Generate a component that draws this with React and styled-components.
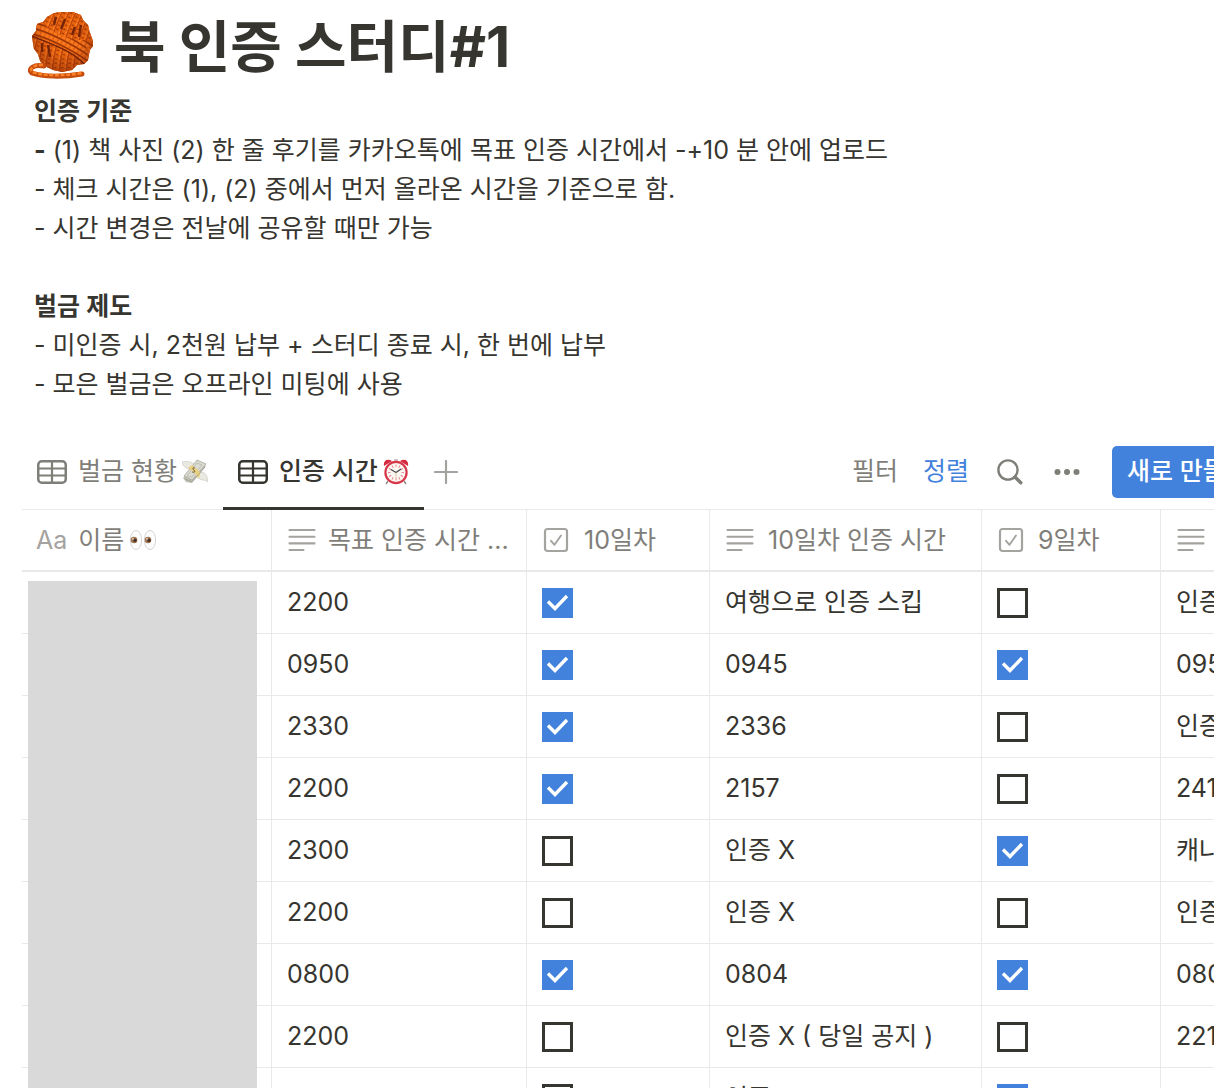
import React from 'react'
import styled, { createGlobalStyle, css } from 'styled-components'

const colors = {
  text: '#37352f',
  gray: '#7f7e79',
  icon: '#a4a39f',
  line: '#e9e9e7',
  blue: '#4281dc',
  mask: '#d9d9d9'
}

const rows = [
  { time: '2200', day10: true, day10Time: '여행으로 인증 스킵', day9: false, day9Time: '인증 X' },
  { time: '0950', day10: true, day10Time: '0945', day9: true, day9Time: '0950' },
  { time: '2330', day10: true, day10Time: '2336', day9: false, day9Time: '인증 X' },
  { time: '2200', day10: true, day10Time: '2157', day9: false, day9Time: '2410' },
  { time: '2300', day10: false, day10Time: '인증 X', day9: true, day9Time: '캐나다' },
  { time: '2200', day10: false, day10Time: '인증 X', day9: false, day9Time: '인증 X' },
  { time: '0800', day10: true, day10Time: '0804', day9: true, day9Time: '0800' },
  { time: '2200', day10: false, day10Time: '인증 X ( 당일 공지 )', day9: false, day9Time: '2210' },
  { time: '1000', day10: false, day10Time: '인증 X', day9: true, day9Time: '1000' }
]

const strands = [-36, -29, -22, -15, -8, -1, 6, 13, 20, 27]

const YarnIcon = () =>
  <svg width="66" height="68" viewBox="0 0 66 68" aria-hidden="true">
    <defs>
      <clipPath id="ball">
        <path d="M34 1 L45 1 L53 4 L55 9 L60 14 L62 22 L65 30 L65 35 L62 39 L60 49 L56 53 L49 54 L44 59 L34 61 L25 59 L17 55 L12 50 L10 43 L6 38 L5 32 L4 25 L8 20 L9 13 L15 11 L19 6 L26 2Z" />
      </clipPath>
      <clipPath id="band"><path d="M9 13 L14 11 C26 24 40 29 66 30 L64 36 L58 36 L61 50 L56 53 C44 38 22 32 4 24Z" /></clipPath>
      <radialGradient id="shade" cx="50%" cy="38%" r="60%">
        <stop offset="0.5" stopColor="#7a2005" stopOpacity="0" />
        <stop offset="1" stopColor="#7a2005" stopOpacity="0.5" />
      </radialGradient>
    </defs>
    <g clipPath="url(#ball)" fill="none">
      <path d="M0 0H66V66H0Z" fill="#b9440b" />
      {strands.map(x =>
        <g key={x}>
          <path d={`M${36 + x} 66 Q${35 + x} 38 ${54 + x} -2`} stroke="#e8640f" strokeWidth="5.4" />
          <path d={`M${35 + x} 66 Q${34 + x} 38 ${53 + x} -2`} stroke="#a33c0a" strokeWidth="2.4" strokeDasharray="1.2 3.2" />
          <path d={`M${38 + x} 66 Q${37 + x} 38 ${56 + x} -2`} stroke="#ff8127" strokeWidth="1.2" strokeDasharray="3 1.4" />
        </g>
      )}
      <path d="M28 6 L26 14 M37 8 L33 18 M53 14 L51 26 M47 16 L44 24 M14 32 L14 41 M20 34 L22 46" stroke="#742407" strokeWidth="2.4" />
      <g clipPath="url(#band)">
        <path d="M0 0H66V60H0Z" fill="#dc5a0d" />
        {[-14, -8, -2, 4, 10].map(y =>
          <g key={y}>
            <path d={`M0 ${18 + y} Q28 ${24 + y} 66 ${50 + y}`} stroke="#8f3208" strokeWidth="1.2" />
            <path d={`M0 ${21 + y} Q28 ${27 + y} 66 ${53 + y}`} stroke="#fa7a20" strokeWidth="3" strokeDasharray="3.4 1.2" />
          </g>
        )}
      </g>
      <path d="M4 25 C22 33 44 39 57 54" stroke="#74240a" strokeWidth="1.4" />
      <circle cx="35" cy="31" r="32" fill="url(#shade)" />
    </g>
    <path d="M16 55 C6 53 -1 58 4 62 C14 66 36 66 54 63" fill="none" stroke="#c64c0b" strokeWidth="5" strokeLinecap="round" />
    <path d="M15 54 C6 53 0 58 5 61 C14 65 36 65 54 62" fill="none" stroke="#f98029" strokeWidth="2.6" strokeDasharray="4 1.6" />
  </svg>

const MoneyIcon = () =>
  <svg width="26" height="26" viewBox="0 0 26 26" aria-hidden="true">
    <path d="M9 10 C5 10 1 8 0 3 C4 2 9 2 13 6Z" fill="#e9e8e1" stroke="#d0cec7" strokeWidth="0.8" />
    <path d="M17 15 C21 11 25 14 26 23 C23 20 20 22 16 19Z" fill="#e9e8e1" stroke="#d0cec7" strokeWidth="0.8" />
    <path d="M1 19 L16 2 L24 7 L10 24 L4 23Z" fill="#bfbeb2" />
    <path d="M2 17 L15 1 L24 5 L10 21Z" fill="#dcdbd2" stroke="#a9a89d" strokeWidth="0.8" />
    <path d="M5 17 L15 4 L20 6 L10 18Z" fill="none" stroke="#b9b8ac" strokeWidth="0.8" />
    <path d="M6 9 L10 6 L18 13 L18 17 L15 19 L14 15Z" fill="#ead17f" />
    <path d="M13 9 Q10 8 11 10 T13 12 Q13 14 10 13" fill="none" stroke="#77684a" />
    <path d="M3 20 L10 23 L23 8" fill="none" stroke="#9b9a90" strokeWidth="0.7" />
  </svg>

const ticks = [0, 30, 60, 90, 120, 150, 180, 210, 240, 270, 300, 330]

const ClockIcon = () =>
  <svg width="26" height="26" viewBox="0 0 26 26" aria-hidden="true">
    <path d="M5 22 L3 25 M21 22 L23 25" stroke="#8c8a88" strokeWidth="1.4" />
    <path d="M1 7 C0 2 4 -1 9 2Z M25 7 C26 2 22 -1 17 2Z" fill="#d6293d" />
    <path d="M11 1H15M13 1V4" stroke="#c9b9b9" strokeWidth="1.4" />
    <circle cx="13" cy="13.5" r="10.6" fill="#fbf6f2" stroke="#d6384a" strokeWidth="2.2" />
    {ticks.map(a => <path key={a} d="M13 5.5V8" stroke="#ea7f8a" strokeWidth="0.9" transform={`rotate(${a} 13 13.5)`} />)}
    <path d="M8 10.5 L13 13.5 L18 10" fill="none" stroke="#444" strokeWidth="1.1" />
    <path d="M13 13.5V20" stroke="#d6c4a0" strokeWidth="0.9" />
  </svg>

const EyesIcon = () =>
  <svg width="26" height="22" viewBox="0 0 26 22" aria-hidden="true">
    {[6, 20].map(x =>
      <g key={x}>
        <ellipse cx={x} cy="11" rx="5.6" ry="9.6" fill="#fdfdfd" stroke="#d5d5d8" />
        <circle cx={x - 2} cy="11" r="3.3" fill="#a37a55" />
        <circle cx={x - 1} cy="11.4" r="1.8" fill="#4b3328" />
        <circle cx={x - 3} cy="9.8" r="0.9" fill="#e8d5c8" />
      </g>
    )}
  </svg>

const TableIcon = () =>
  <svg width="30" height="24" viewBox="0 0 30 24" fill="none" stroke="currentColor" aria-hidden="true">
    <rect x="1.25" y="1.25" width="27.5" height="21.5" rx="3.5" strokeWidth="2.5" />
    <path d="M1 8.5H29M1 15.5H29M15 1V23" strokeWidth="2.2" />
  </svg>

const PlusIcon = () =>
  <svg width="24" height="24" viewBox="0 0 24 24" aria-hidden="true">
    <path d="M12 1V23M1 12H23" stroke={colors.icon} strokeWidth="2.2" strokeLinecap="round" />
  </svg>

const SearchIcon = () =>
  <svg width="26" height="26" viewBox="0 0 26 26" fill="none" stroke="currentColor" strokeLinecap="round" aria-hidden="true">
    <circle cx="11" cy="11" r="9.6" strokeWidth="2.4" />
    <path d="M18 18L23.8 23.8" strokeWidth="3.4" />
  </svg>

const DotsIcon = () =>
  <svg width="26" height="8" viewBox="0 0 26 8" fill="currentColor" aria-hidden="true">
    <circle cx="3.5" cy="4" r="3" />
    <circle cx="13" cy="4" r="3" />
    <circle cx="22.5" cy="4" r="3" />
  </svg>

const TextIcon = () =>
  <svg width="28" height="24" viewBox="0 0 28 24" aria-hidden="true">
    <path d="M1.5 2H26.5M1.5 8.7H26.5M1.5 15.4H26.5M1.5 22H15.5" stroke={colors.icon} strokeWidth="2.1" strokeLinecap="round" />
  </svg>

const CheckIcon = () =>
  <svg width="26" height="26" viewBox="0 0 26 26" fill="none" stroke={colors.icon} aria-hidden="true">
    <rect x="2" y="2" width="22" height="22" rx="2.5" strokeWidth="2.2" />
    <path d="M8 13.8L11.5 17.8L18 8.5" strokeWidth="1.9" strokeLinecap="round" strokeLinejoin="round" />
  </svg>

const TickIcon = () =>
  <svg width="31" height="30" viewBox="0 0 31 30" aria-hidden="true">
    <path d="M6 13.5L13 20.5L25 8" fill="none" stroke="white" strokeWidth="3.4" />
  </svg>

const Check = ({ label, checked }) =>
  <CheckLabel>
    <CheckInput type="checkbox" aria-label={label} defaultChecked={checked} />
    <TickIcon />
  </CheckLabel>

const App = () =>
  <Page>
    <GlobalStyle />
    <Header>
      <YarnIcon />
      <Title>북 인증 스터디#1</Title>
    </Header>
    <Rules>
      <RuleTitle>인증 기준</RuleTitle>
      <Rule><b>-</b> (1) 책 사진 (2) 한 줄 후기를 카카오톡에 목표 인증 시간에서 -+10 분 안에 업로드</Rule>
      <Rule>- 체크 시간은 (1), (2) 중에서 먼저 올라온 시간을 기준으로 함.</Rule>
      <Rule>- 시간 변경은 전날에 공유할 때만 가능</Rule>
    </Rules>
    <Rules>
      <RuleTitle>벌금 제도</RuleTitle>
      <Rule>- 미인증 시, 2천원 납부 + 스터디 종료 시, 한 번에 납부</Rule>
      <Rule>- 모은 벌금은 오프라인 미팅에 사용</Rule>
    </Rules>
    <Database>
      <Toolbar>
        <Tab><TableIcon /><TabText>벌금 현황<MoneyIcon /></TabText></Tab>
        <Tab $active><TableIcon /><TabText>인증 시간<ClockIcon /></TabText></Tab>
        <IconButton aria-label="보기 추가"><PlusIcon /></IconButton>
        <Actions>
          <Action>필터</Action>
          <Action $active>정렬</Action>
          <IconButton aria-label="검색"><SearchIcon /></IconButton>
          <IconButton aria-label="더 보기"><DotsIcon /></IconButton>
          <NewButton>새로 만들기</NewButton>
        </Actions>
      </Toolbar>
      <TableBox>
        <Table>
          <colgroup>
            <Col $width={250} />
            <Col $width={255} />
            <Col $width={183} />
            <Col $width={272} />
            <Col $width={179} />
            <Col $width={272} />
          </colgroup>
          <thead>
            <tr>
              <Th><HeadCell $gap={11}>Aa<HeadText>이름<EyesIcon /></HeadText></HeadCell></Th>
              <Th><HeadCell $gap={12}><TextIcon />목표 인증 시간 ...</HeadCell></Th>
              <Th><HeadCell $gap={15}><CheckIcon />10일차</HeadCell></Th>
              <Th><HeadCell><TextIcon />10일차 인증 시간</HeadCell></Th>
              <Th><HeadCell><CheckIcon />9일차</HeadCell></Th>
              <Th><HeadCell><TextIcon />9일차 인증 시간</HeadCell></Th>
            </tr>
          </thead>
          <tbody>
            {rows.map((row, i) =>
              <tr key={i}>
                <Td />
                <Td>{row.time}</Td>
                <Td><Check label="10일차" checked={row.day10} /></Td>
                <Td>{row.day10Time}</Td>
                <Td><Check label="9일차" checked={row.day9} /></Td>
                <Td>{row.day9Time}</Td>
              </tr>
            )}
          </tbody>
        </Table>
        <NameMask />
      </TableBox>
    </Database>
  </Page>

const GlobalStyle = createGlobalStyle`
  html {
    scrollbar-width: none;
  }

  body {
    margin: 0;
    background-color: white;
    color: ${colors.text};
    font-family: Inter, 'Noto Sans CJK KR', sans-serif;
    font-size: 25px;
    line-height: 39px;
  }

  *, *::before, *::after {
    box-sizing: border-box;
  }

  button {
    border: 0;
    padding: 0;
    background: none;
    color: inherit;
    font: inherit;
    white-space: nowrap;
    cursor: pointer;
  }

  svg {
    display: block;
    flex-shrink: 0;
  }
`

const Page = styled.main`
  padding: 11px 0 0 22px;
  overflow: hidden;
`

const Header = styled.header`
  display: flex;
  align-items: flex-start;
  gap: 20px;
  padding-left: 6px;
`

const Title = styled.h1`
  margin: 0;
  font-size: 56px;
  font-weight: 700;
  line-height: 72px;
`

const Rules = styled.section`
  padding: 9px 12px 0;
  margin-bottom: 30px;
`

const RuleTitle = styled.h2`
  margin: 0;
  font-size: 25px;
  font-weight: 600;
  line-height: 39px;
`

const Rule = styled.p`
  margin: 0;
`

const Database = styled.section`
  margin: 0 -50px 0 0;
`

const Toolbar = styled.div`
  display: flex;
  align-items: center;
  height: 76px;
  border-bottom: 1px solid ${colors.line};
`

const Tab = styled.button`
  display: flex;
  align-items: center;
  gap: 11px;
  height: 76px;
  padding: 0 15px;
  color: ${colors.gray};

  ${props => props.$active && css`
    border-bottom: 3px solid ${colors.text};
    padding-top: 3px;
    color: ${colors.text};
    font-weight: 500;
  `}
`

const TabText = styled.span`
  display: flex;
  align-items: center;
  gap: 5px;
`

const IconButton = styled.button`
  display: flex;
  padding: 0 10px;
  color: ${colors.gray};
`

const Actions = styled.div`
  display: flex;
  align-items: center;
  gap: 11px;
  margin-left: auto;
`

const Action = styled.button`
  padding: 0 7px;
  color: ${props => props.$active ? colors.blue : colors.gray};
`

const NewButton = styled.button`
  width: 152px;
  height: 52px;
  margin-left: 11px;
  padding: 0 15px;
  border-radius: 5px;
  background-color: ${colors.blue};
  color: white;
  font-weight: 500;
  text-align: left;
`

const TableBox = styled.div`
  position: relative;
`

const Table = styled.table`
  width: 1411px;
  table-layout: fixed;
  border-collapse: separate;
  border-spacing: 0;
`

const Col = styled.col`
  width: ${props => props.$width}px;
`

const cell = css`
  height: 62px;
  padding: 0 15px;
  border-bottom: 2px solid ${colors.line};
  border-right: 1px solid ${colors.line};
  text-align: left;
  white-space: nowrap;
  overflow: hidden;
`

const Th = styled.th`
  ${cell}
  padding: 0 16px;
  color: ${colors.gray};
  font-weight: 400;

  &:first-child {
    padding-left: 14px;
    color: ${colors.icon};
  }
`

const Td = styled.td`
  ${cell}
  border-bottom-width: 1px;
`

const HeadCell = styled.div`
  display: flex;
  align-items: center;
  gap: ${props => props.$gap || 14}px;
`

const HeadText = styled.span`
  display: flex;
  align-items: center;
  gap: 6px;
  color: ${colors.gray};
`

const CheckLabel = styled.label`
  display: grid;
  width: 31px;

  > * {
    grid-area: 1 / 1;
  }
`

const CheckInput = styled.input`
  appearance: none;
  width: 31px;
  height: 30px;
  margin: 0;
  border: 3px solid ${colors.text};

  &:checked {
    border: 0;
    background-color: ${colors.blue};
  }

  &:not(:checked) + svg {
    visibility: hidden;
  }
`

const NameMask = styled.div`
  position: absolute;
  top: 71px;
  bottom: 0;
  left: 6px;
  width: 229px;
  background-color: ${colors.mask};
`

export default App
